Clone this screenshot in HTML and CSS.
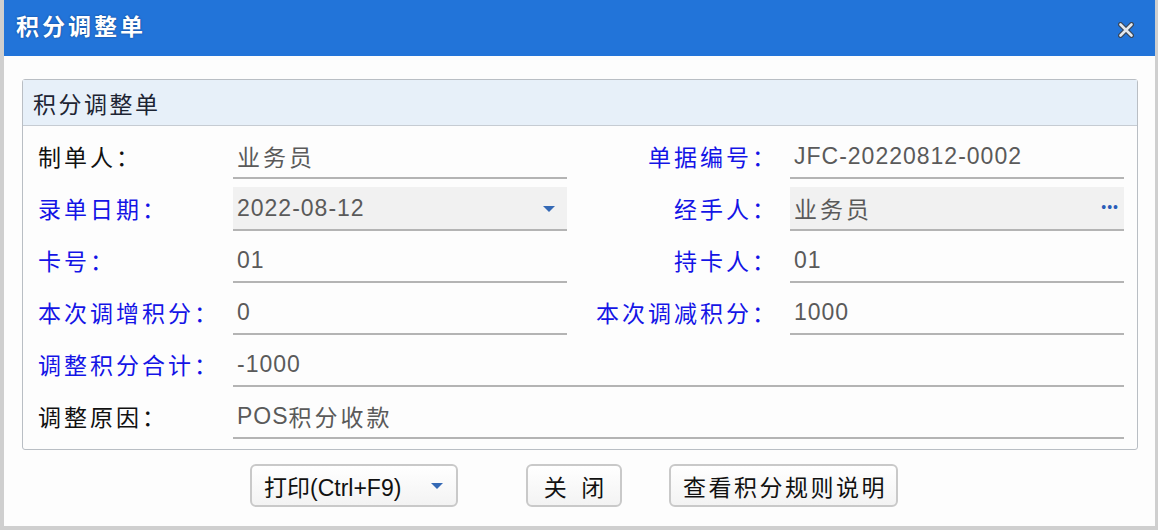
FILE: index.html
```html
<!DOCTYPE html>
<html>
<head>
<meta charset="utf-8">
<title>积分调整单</title>
<link rel="stylesheet" href="styles.css">
</head>
<body>
<div class="window">
  <div class="titlebar">
    <span class="title">积分调整单</span>
    <svg class="close" width="16" height="16" viewBox="0 0 16 16">
      <path d="M2.5 2.5 L13.5 13.5 M13.5 2.5 L2.5 13.5" stroke="#3a4658" stroke-width="5" stroke-linecap="round"/>
      <path d="M2.5 2.5 L13.5 13.5 M13.5 2.5 L2.5 13.5" stroke="#e3e8ee" stroke-width="2.6" stroke-linecap="round"/>
    </svg>
  </div>
  <div class="content">
    <div class="panel">
      <div class="panel-head">积分调整单</div>
      <div class="form">
        <div class="label">制单人：</div>
        <div class="field cn">业务员</div>
        <div class="label right req">单据编号：</div>
        <div class="field">JFC-20220812-0002</div>

        <div class="label req">录单日期：</div>
        <div class="field shaded">2022-08-12<span class="arrow"></span></div>
        <div class="label right req">经手人：</div>
        <div class="field shaded cn">业务员<span class="dots">•••</span></div>

        <div class="label req">卡号：</div>
        <div class="field">01</div>
        <div class="label right req">持卡人：</div>
        <div class="field">01</div>

        <div class="label req">本次调增积分：</div>
        <div class="field">0</div>
        <div class="label right req">本次调减积分：</div>
        <div class="field">1000</div>

        <div class="label req">调整积分合计：</div>
        <div class="field wide">-1000</div>

        <div class="label">调整原因：</div>
        <div class="field wide">POS<span class="cn">积分收款</span></div>
      </div>
    </div>
    <div class="buttons">
      <button class="btn btn-print">打印(Ctrl+F9)<span class="arrow"></span></button>
      <button class="btn btn-close">关 闭</button>
      <button class="btn btn-rule">查看积分规则说明</button>
    </div>
  </div>
</div>
</body>
</html>
```

FILE: styles.css
```css
body {
  margin: 0;
  background-color: #fff;
  font-family: "Liberation Sans", "Noto Sans CJK SC", sans-serif;
}

.window {
  width: 1158px;
  height: 530px;
  box-sizing: border-box;
  border-left: 4px solid #cfcfcf;
  border-right: 3px solid #cfcfcf;
  border-bottom: 4px solid #cfcfcf;
  background-color: #fdfdfd;
  display: flex;
  flex-direction: column;
}

.titlebar {
  height: 56px;
  background-color: #2274d9;
  display: flex;
  align-items: center;
  justify-content: space-between;
  padding: 0 21px 0 12px;
  flex-shrink: 0;
}

.title {
  color: #fff;
  font-size: 23px;
  font-weight: bold;
  letter-spacing: 3px;
  text-shadow: 0 0 2px #0b3a80;
  margin-top: -6px;
}

.close {
  margin-top: 4px;
}

.content {
  padding: 23px 17px 0 18px;
}

.panel {
  border: 1px solid #b9bec4;
  border-radius: 3px;
  background-color: #fdfdfd;
  padding-bottom: 10px;
}

.panel-head {
  height: 46px;
  box-sizing: border-box;
  background-color: #e7f0f9;
  border-bottom: 1px solid #c6ccd3;
  padding-left: 10px;
  display: flex;
  align-items: center;
  font-size: 23px;
  letter-spacing: 2.5px;
  color: #1c2433;
}

.form {
  display: grid;
  grid-template-columns: 195px 334px 223px 334px;
  padding: 1px 0 0 15px;
}

.label,
.field {
  height: 42px;
  margin-top: 8px;
  display: flex;
  align-items: center;
  font-size: 23px;
  letter-spacing: 1px;
}

.label {
  color: #111;
  letter-spacing: 3px;
  border-bottom: 2px solid transparent;
}

.label.req {
  color: #1414e6;
}

.label.right {
  justify-content: flex-end;
  padding-right: 12px;
}

.field {
  color: #5a5a5a;
  border-bottom: 2px solid #b4b4b4;
  padding-left: 4px;
  position: relative;
}

.cn {
  letter-spacing: 3px;
}

.field.wide {
  grid-column: 2 / 5;
}

.field.shaded {
  background-color: #f1f1f1;
}

.field .arrow {
  position: absolute;
  right: 12px;
  top: 19px;
  border-left: 6px solid transparent;
  border-right: 6px solid transparent;
  border-top: 6px solid #3569b5;
}

.field .dots {
  position: absolute;
  right: 5px;
  top: 13px;
  font-size: 14px;
  line-height: 14px;
  letter-spacing: 1px;
  color: #2a5cb8;
}

.buttons {
  display: flex;
  padding: 14px 0 0 228px;
}

.btn {
  height: 43px;
  font-family: "Liberation Sans", "Noto Sans CJK SC", sans-serif;
  font-size: 23px;
  color: #111;
  background: linear-gradient(#ffffff, #f3f3f3);
  border: 2px solid #c9c9c9;
  border-radius: 6px;
  padding: 0 12px;
  display: flex;
  align-items: center;
  cursor: pointer;
}

.btn-print {
  width: 208px;
}

.btn-print .arrow {
  margin-left: 30px;
  border-left: 6px solid transparent;
  border-right: 6px solid transparent;
  border-top: 6px solid #3569b5;
}

.btn-close {
  width: 96px;
  margin-left: 68px;
  justify-content: center;
  letter-spacing: 4px;
  padding: 0 0 0 4px;
}

.btn-rule {
  width: 229px;
  margin-left: 47px;
  justify-content: center;
  padding: 0 0 0 3px;
  letter-spacing: 2.5px;
}
```
